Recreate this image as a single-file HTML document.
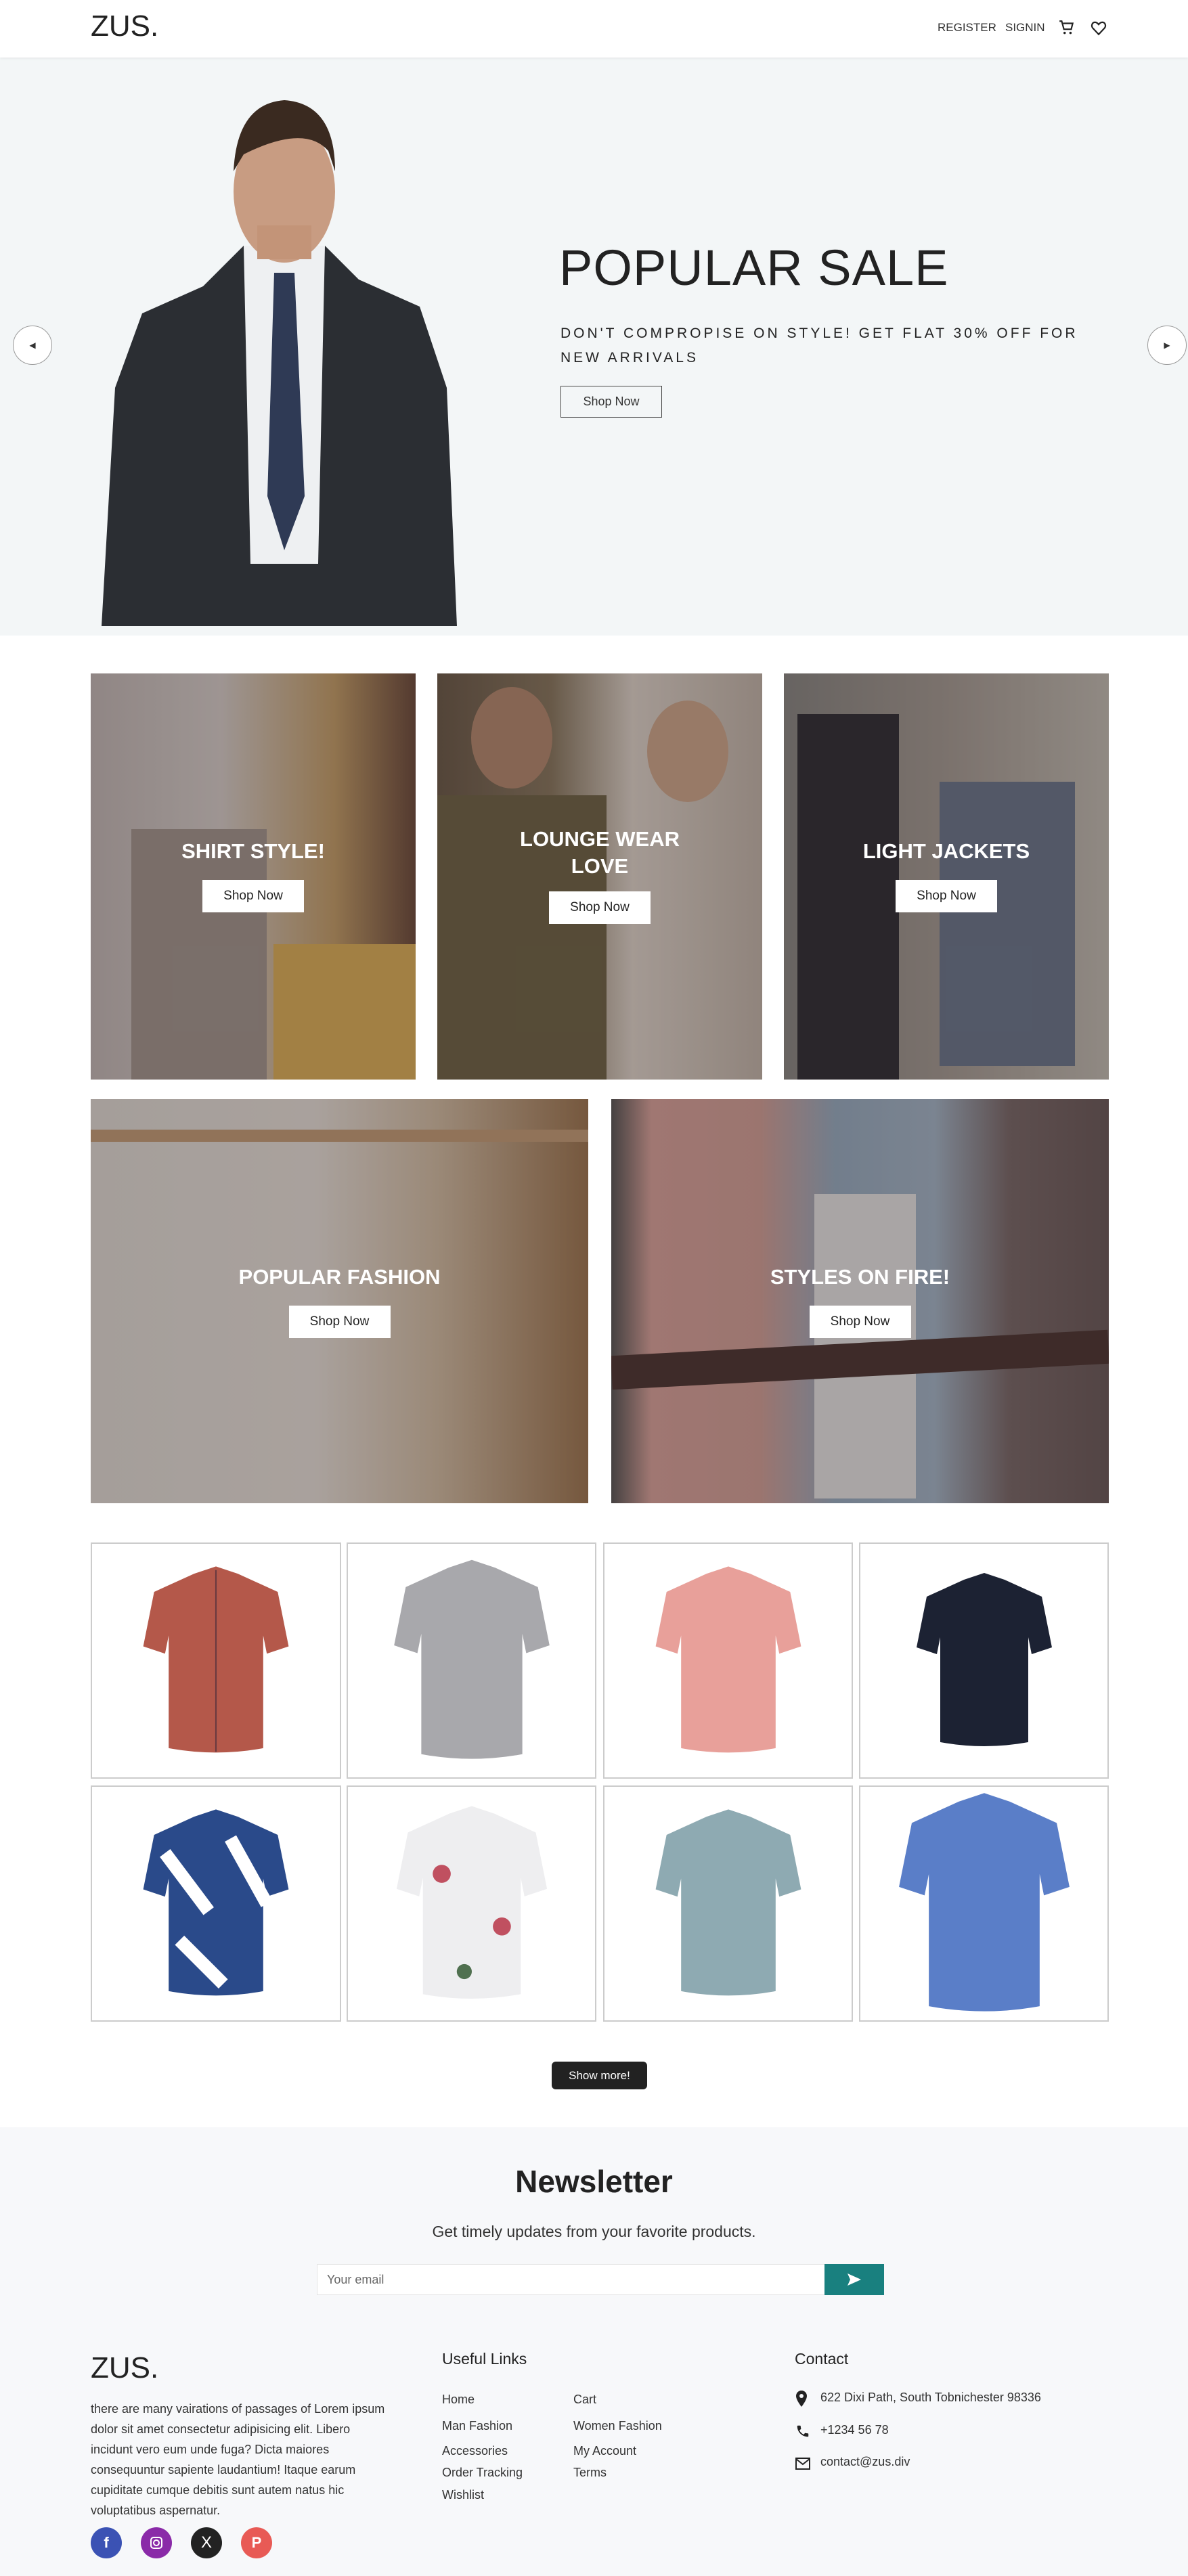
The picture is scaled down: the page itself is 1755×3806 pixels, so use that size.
<!DOCTYPE html>
<html><head><meta charset="utf-8">
<style>
*{margin:0;padding:0;box-sizing:border-box}
body{width:1755px;height:3806px;position:relative;background:#fff;font-family:"Liberation Sans",sans-serif;color:#222;overflow:hidden}
.a{position:absolute}
.nav{left:0;top:0;width:1755px;height:85px;background:#fff;box-shadow:0 1px 4px rgba(0,0,0,.08);z-index:2}
.hero{left:0;top:85px;width:1755px;height:854px;background:#f3f6f7}
.arrow{width:58px;height:58px;border:1px solid #999;border-radius:50%;background:#fff;display:flex;align-items:center;justify-content:center;font-size:12px;color:#333}
.cat{overflow:hidden}
.cat .ov{position:absolute;inset:0;background:rgba(40,30,30,.35)}
.cat .t{position:absolute;left:0;right:0;text-align:center;color:#fff;font-weight:bold;font-size:31px}
.cat .b{position:absolute;left:50%;transform:translateX(-50%);width:150px;height:48px;background:#fff;color:#222;font-size:19px;display:flex;align-items:center;justify-content:center}
.prod{border:2px solid #ccc;background:#fff;display:flex;align-items:center;justify-content:center}
.fl{font-size:18px;color:#333}
</style></head><body>
<div class="a nav">
 <div class="a" style="left:134px;top:14px;font-size:44px;color:#222">ZUS.</div>
 <div class="a" style="left:1385px;top:31px;font-size:17px;color:#333">REGISTER</div>
 <div class="a" style="left:1485px;top:31px;font-size:17px;color:#333">SIGNIN</div>
 <svg class="a" style="left:1563px;top:28px" width="26" height="26" viewBox="0 0 24 24"><path d="M2 3h3l3 11h10l2-8H7" fill="none" stroke="#222" stroke-width="2"/><circle cx="9" cy="19" r="1.6" fill="#222"/><circle cx="17" cy="19" r="1.6" fill="#222"/></svg>
 <svg class="a" style="left:1610px;top:28px" width="26" height="26" viewBox="0 0 24 24"><path d="M12 21L4 12.5C1.5 9.5 3 4.5 7 4.5c2.3 0 4 1.8 5 3 1-1.2 2.7-3 5-3 4 0 5.5 5 3 8z" fill="none" stroke="#222" stroke-width="2"/></svg>
</div>
<div class="a hero">
 <svg class="a" style="left:150px;top:48px" width="525" height="792" viewBox="0 0 525 792">
  <path d="M210 230 L150 290 L60 330 L20 440 L0 792 L525 792 L510 440 L470 320 L380 280 L330 230 Z" fill="#2b2e33"/>
  <path d="M210 230 L330 230 L320 700 L220 700 Z" fill="#eef0f2"/>
  <path d="M255 270 L285 270 L300 600 L270 680 L245 600 Z" fill="#2f3a55"/>
  <ellipse cx="270" cy="150" rx="75" ry="105" fill="#c89c82"/>
  <path d="M195 120 Q200 20 270 15 Q345 20 345 120 L335 90 Q300 50 210 95 Z" fill="#3a2a20"/>
  <rect x="230" y="200" width="80" height="50" fill="#c39478"/>
 </svg>
 <div class="a" style="left:826px;top:268px;font-size:74px;color:#222;letter-spacing:1px">POPULAR SALE</div>
 <div class="a" style="left:828px;top:390px;font-size:21px;color:#222;letter-spacing:4px;line-height:36px;width:800px">DON'T COMPROPISE ON STYLE! GET FLAT 30% OFF FOR<br>NEW ARRIVALS</div>
 <div class="a" style="left:828px;top:485px;width:150px;height:47px;border:1px solid #444;display:flex;align-items:center;justify-content:center;font-size:18px;color:#333">Shop Now</div>
 <div class="a arrow" style="left:19px;top:396px">&#9664;</div>
 <div class="a arrow" style="left:1695px;top:396px">&#9654;</div>
</div>

<div class="a cat" style="left:134px;top:995px;width:480px;height:600px;background:linear-gradient(90deg,#c8bfbd 0%,#ddd6d2 40%,#c9a36a 75%,#6b4a3a 100%)">
 <div class="a" style="left:60px;top:230px;width:200px;height:370px;background:#a69a92"></div>
 <div class="a" style="left:270px;top:400px;width:210px;height:200px;background:#e3b65a"></div>
 <div class="ov"></div><div class="t" style="top:245px">SHIRT STYLE!</div><div class="b" style="top:305px">Shop Now</div></div>
<div class="a cat" style="left:646px;top:995px;width:480px;height:600px;background:linear-gradient(90deg,#6a5a48 0%,#8a7a60 35%,#e6ddd3 60%,#c8bcb0 100%)">
 <div class="a" style="left:50px;top:20px;width:120px;height:150px;border-radius:50%;background:#b88c70"></div>
 <div class="a" style="left:310px;top:40px;width:120px;height:150px;border-radius:50%;background:#d4ac90"></div>
 <div class="a" style="left:0;top:180px;width:250px;height:420px;background:#6f6545"></div>
 <div class="ov"></div><div class="t" style="top:225px;line-height:40px">LOUNGE WEAR<br>LOVE</div><div class="b" style="top:322px">Shop Now</div></div>
<div class="a cat" style="left:1158px;top:995px;width:480px;height:600px;background:linear-gradient(90deg,#8a8a86 0%,#a8a098 50%,#c8c4ba 100%)">
 <div class="a" style="left:20px;top:60px;width:150px;height:540px;background:#2c2c34"></div>
 <div class="a" style="left:230px;top:160px;width:200px;height:420px;background:#6a7890"></div>
 <div class="ov"></div><div class="t" style="top:245px">LIGHT JACKETS</div><div class="b" style="top:305px">Shop Now</div></div>
<div class="a cat" style="left:134px;top:1624px;width:735px;height:597px;background:linear-gradient(90deg,#e8e4de 0%,#efe9e2 45%,#d8c3a8 70%,#a07850 100%)">
 <div class="a" style="left:0;top:45px;width:735px;height:18px;background:#c9a27a"></div>
 <div class="ov"></div><div class="t" style="top:245px">POPULAR FASHION</div><div class="b" style="top:305px">Shop Now</div></div>
<div class="a cat" style="left:903px;top:1624px;width:735px;height:597px;background:linear-gradient(90deg,#555 0%,#e0a8a0 8%,#d9a59c 30%,#9ab2c8 45%,#a8bccf 65%,#7a6a6a 80%,#6a5a5a 100%)">
 <div class="a" style="left:300px;top:140px;width:150px;height:450px;background:#eee"></div>
 <div class="a" style="left:0;top:360px;width:735px;height:50px;background:#4a3430;transform:rotate(-3deg)"></div>
 <div class="ov"></div><div class="t" style="top:245px">STYLES ON FIRE!</div><div class="b" style="top:305px">Shop Now</div></div>

<svg width="0" height="0" style="position:absolute"><defs><path id="sh" d="M70 10 L100 0 L130 10 L185 35 L200 110 L170 120 L165 95 L165 250 Q100 262 35 250 L35 95 L30 120 L0 110 L15 35 Z"/></defs></svg>
<div class="a prod" style="left:134px;top:2279px;width:370px;height:349px"><svg width="300" height="290" viewBox="-5 -5 210 270"><use href="#sh" fill="#b4584a"/><line x1="100" y1="5" x2="100" y2="255" stroke="#6a3a40" stroke-width="2"/></svg></div>
<div class="a prod" style="left:512px;top:2279px;width:369px;height:349px"><svg width="300" height="310" viewBox="-5 -5 210 270"><use href="#sh" fill="#a8a8ac"/></svg></div>
<div class="a prod" style="left:891px;top:2279px;width:369px;height:349px"><svg width="300" height="290" viewBox="-5 -5 210 270"><use href="#sh" fill="#e8a09a"/></svg></div>
<div class="a prod" style="left:1269px;top:2279px;width:369px;height:349px"><svg width="300" height="270" viewBox="-5 -5 210 270"><use href="#sh" fill="#1c2233"/></svg></div>
<div class="a prod" style="left:134px;top:2638px;width:370px;height:349px"><svg width="300" height="290" viewBox="-5 -5 210 270"><use href="#sh" fill="#2a4a8a"/><path d="M30 60 L90 140 M120 40 L170 130 M50 180 L110 240" stroke="#fff" stroke-width="18"/></svg></div>
<div class="a prod" style="left:512px;top:2638px;width:369px;height:349px"><svg width="300" height="300" viewBox="-5 -5 210 270"><use href="#sh" fill="#eeeef0"/><circle cx="60" cy="90" r="12" fill="#c05060"/><circle cx="140" cy="160" r="12" fill="#c05060"/><circle cx="90" cy="220" r="10" fill="#507050"/></svg></div>
<div class="a prod" style="left:891px;top:2638px;width:369px;height:349px"><svg width="300" height="290" viewBox="-5 -5 210 270"><use href="#sh" fill="#8eaab2"/></svg></div>
<div class="a prod" style="left:1269px;top:2638px;width:369px;height:349px"><svg width="300" height="340" viewBox="-5 -5 210 270"><use href="#sh" fill="#5a7ec8"/></svg></div>

<div class="a" style="left:815px;top:3046px;width:141px;height:41px;background:#222;border-radius:6px;color:#fff;font-size:17px;display:flex;align-items:center;justify-content:center">Show more!</div>

<div class="a" style="left:0;top:3143px;width:1755px;height:663px;background:#f7f8fa"></div>
<div class="a" style="left:0;top:3196px;width:1755px;text-align:center;font-size:46px;font-weight:bold;color:#222">Newsletter</div>
<div class="a" style="left:0;top:3284px;width:1755px;text-align:center;font-size:23px;color:#333">Get timely updates from your favorite products.</div>
<div class="a" style="left:468px;top:3345px;width:752px;height:46px;background:#fff;border:1px solid #e3e3e3;font-size:18px;color:#666;padding:12px 14px">Your email</div>
<div class="a" style="left:1218px;top:3345px;width:88px;height:46px;background:#19807f;display:flex;align-items:center;justify-content:center"><svg width="24" height="22" viewBox="0 0 24 22"><path d="M2 2 L22 11 L2 20 L6 11 Z" fill="#fff"/></svg></div>

<div class="a" style="left:134px;top:3474px;font-size:44px;color:#222">ZUS.</div>
<div class="a" style="left:134px;top:3544px;width:450px;font-size:18px;line-height:30px;color:#333">there are many vairations of passages of Lorem ipsum dolor sit amet consectetur adipisicing elit. Libero incidunt vero eum unde fuga? Dicta maiores consequuntur sapiente laudantium! Itaque earum cupiditate cumque debitis sunt autem natus hic voluptatibus aspernatur.</div>
<div class="a" style="left:134px;top:3734px;width:46px;height:46px;border-radius:50%;background:#3b52b4;color:#fff;font-weight:bold;font-size:22px;display:flex;align-items:center;justify-content:center">f</div>
<div class="a" style="left:208px;top:3734px;width:46px;height:46px;border-radius:50%;background:#8a2aa8;display:flex;align-items:center;justify-content:center"><svg width="22" height="22" viewBox="0 0 22 22"><rect x="3" y="3" width="16" height="16" rx="4" fill="none" stroke="#fff" stroke-width="2"/><circle cx="11" cy="11" r="4" fill="none" stroke="#fff" stroke-width="2"/></svg></div>
<div class="a" style="left:282px;top:3734px;width:46px;height:46px;border-radius:50%;background:#222;color:#fff;font-size:24px;display:flex;align-items:center;justify-content:center">X</div>
<div class="a" style="left:356px;top:3734px;width:46px;height:46px;border-radius:50%;background:#e85a55;color:#fff;font-weight:bold;font-size:22px;display:flex;align-items:center;justify-content:center">P</div>

<div class="a" style="left:653px;top:3472px;font-size:23px;color:#222">Useful Links</div>
<div class="a fl" style="left:653px;top:3535px">Home</div>
<div class="a fl" style="left:653px;top:3574px">Man Fashion</div>
<div class="a fl" style="left:653px;top:3611px">Accessories</div>
<div class="a fl" style="left:653px;top:3643px">Order Tracking</div>
<div class="a fl" style="left:653px;top:3676px">Wishlist</div>
<div class="a fl" style="left:847px;top:3535px">Cart</div>
<div class="a fl" style="left:847px;top:3574px">Women Fashion</div>
<div class="a fl" style="left:847px;top:3611px">My Account</div>
<div class="a fl" style="left:847px;top:3643px">Terms</div>

<div class="a" style="left:1174px;top:3472px;font-size:23px;color:#222">Contact</div>
<svg class="a" style="left:1175px;top:3532px" width="18" height="24" viewBox="0 0 18 24"><path d="M9 0C4 0 1 4 1 8c0 6 8 16 8 16s8-10 8-16c0-4-3-8-8-8z" fill="#222"/><circle cx="9" cy="8" r="3" fill="#f7f8fa"/></svg>
<div class="a fl" style="left:1212px;top:3532px">622 Dixi Path, South Tobnichester 98336</div>
<svg class="a" style="left:1175px;top:3581px" width="22" height="22" viewBox="0 0 24 24"><path d="M6.6 10.8c1.4 2.8 3.8 5.1 6.6 6.6l2.2-2.2c.3-.3.7-.4 1-.2 1.1.4 2.300.6 3.6.6.6 0 1 .4 1 1V20c0 .6-.4 1-1 1C10.6 21 3 13.4 3 4c0-.6.4-1 1-1h3.5c.6 0 1 .4 1 1 0 1.3.2 2.5.6 3.6.1.3 0 .7-.2 1z" fill="#222"/></svg>
<div class="a fl" style="left:1212px;top:3580px">+1234 56 78</div>
<svg class="a" style="left:1175px;top:3630px" width="22" height="20" viewBox="0 0 22 20"><rect x="1" y="2" width="20" height="16" fill="none" stroke="#222" stroke-width="2"/><path d="M1 3 L11 11 L21 3" fill="none" stroke="#222" stroke-width="2"/></svg>
<div class="a fl" style="left:1212px;top:3627px">contact@zus.div</div>
</body></html>
